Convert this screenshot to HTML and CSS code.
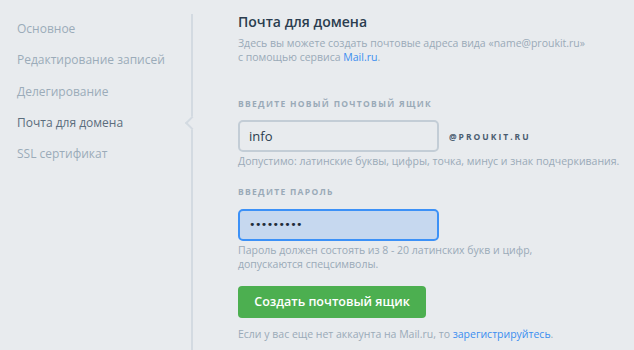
FILE: index.html
```html
<!DOCTYPE html>
<html lang="ru">
<head>
  <meta charset="UTF-8" />
  <title>Почта для домена</title>
  <link rel="stylesheet" href="styles.css">
</head>
<body>

<div class="page">
  <aside class="sidebar">
    <nav class="menu">
      <a href="#">Основное</a>
      <a href="#">Редактирование записей</a>
      <a href="#">Делегирование</a>
      <a href="#" class="active">Почта для домена</a>
      <a href="#">SSL сертификат</a>
    </nav>
  </aside>

  <main class="content">
    <h1>Почта для домена</h1>
    <p class="desc">Здесь вы можете создать почтовые адреса вида «name@proukit.ru»<br>с помощью сервиса <a href="#">Mail.ru</a>.</p>

    <form class="mail-form">
      <label class="field-label">Введите новый почтовый ящик</label>
      <div class="mail-row">
        <input type="text" class="field" value="info" />
        <span class="domain">@proukit.ru</span>
      </div>
      <p class="hint">Допустимо: латинские буквы, цифры, точка, минус и знак подчеркивания.</p>

      <label class="field-label second">Введите пароль</label>
      <input type="password" class="field focused" value="123456789" />
      <p class="hint">Пароль должен состоять из 8 - 20 латинских букв и цифр,<br>допускаются спецсимволы.</p>

      <button type="button" class="create-btn">Создать почтовый ящик</button>
      <p class="hint note">Если у вас еще нет аккаунта на Mail.ru, то <a href="#">зарегистрируйтесь</a>.</p>
    </form>
  </main>
</div>

</body>
</html>
```

FILE: styles.css
```css
body {
  margin: 0;
  background: #e8ebee;
  font-family: 'Open Sans', 'Noto Sans', sans-serif;
  color: #2b3d4f;
}
.page {
  display: flex;
  align-items: flex-start;
  height: 350px;
  overflow: hidden;
}
.sidebar {
  width: 191px;
  margin-top: 14px;
  height: 336px;
  border-right: 2px solid #d3dae1;
}
.menu {
  display: flex;
  flex-direction: column;
  margin-top: -1px;
}
.menu a {
  position: relative;
  padding-left: 17px;
  line-height: 31.3px;
  font-size: 12px;
  color: #9babb9;
  text-decoration: none;
}
.menu a.active {
  color: #5b6d7d;
}
/* little notch on the divider */
.menu a.active::after {
  content: '';
  position: absolute;
  right: -6px;
  top: 11px;
  width: 8px;
  height: 8px;
  background: #e8ebee;
  border-left: 2px solid #d3dae1;
  border-bottom: 2px solid #d3dae1;
  transform: rotate(45deg);
}
.content {
  padding: 12px 0 0 45px;
}
h1 {
  margin: 0;
  font-size: 14px;
  font-weight: 600;
  line-height: 20px;
  color: #2b3d4f;
}
.desc {
  margin: 4px 0 0;
  font-size: 10.5px;
  line-height: 14px;
  color: #9aaab8;
}
.desc a, .note a {
  color: #3b8ef0;
  text-decoration: none;
}
.mail-form {
  margin-top: 34px;
}
.field-label {
  display: block;
  font-size: 8.5px;
  line-height: 12px;
  font-weight: 700;
  letter-spacing: 1.3px;
  text-transform: uppercase;
  color: #9aaab8;
  margin-bottom: 10px;
}
.field-label.second {
  margin-top: 17px;
  margin-bottom: 11px;
}
.mail-row {
  display: flex;
  align-items: center;
  gap: 10px;
}
.field {
  display: block;
  box-sizing: border-box;
  width: 201px;
  height: 32px;
  padding: 0 9px;
  border: 2px solid #c3cdd6;
  border-radius: 5px;
  background: #e8ebee;
  font-family: inherit;
  font-size: 13px;
  color: #2b3d4f;
  outline: none;
}
.field.focused {
  background: #c6d8ef;
  border-color: #3c91f7;
  font-family: 'DejaVu Sans', sans-serif;
  font-size: 11px;
  letter-spacing: -0.6px;
  color: #1f2d3a;
}
.domain {
  font-size: 8.5px;
  font-weight: 700;
  letter-spacing: 2px;
  text-transform: uppercase;
  color: #4a5d70;
}
.hint {
  margin: 2px 0 0;
  font-size: 10.5px;
  line-height: 14.5px;
  color: #9aaab8;
}
.create-btn {
  display: block;
  margin-top: 14px;
  width: 188px;
  height: 32px;
  border: none;
  border-radius: 4px;
  background: #4caf50;
  color: white;
  font-family: inherit;
  font-size: 12.5px;
  font-weight: 600;
  cursor: pointer;
}
.hint.note {
  margin-top: 9px;
}
```
